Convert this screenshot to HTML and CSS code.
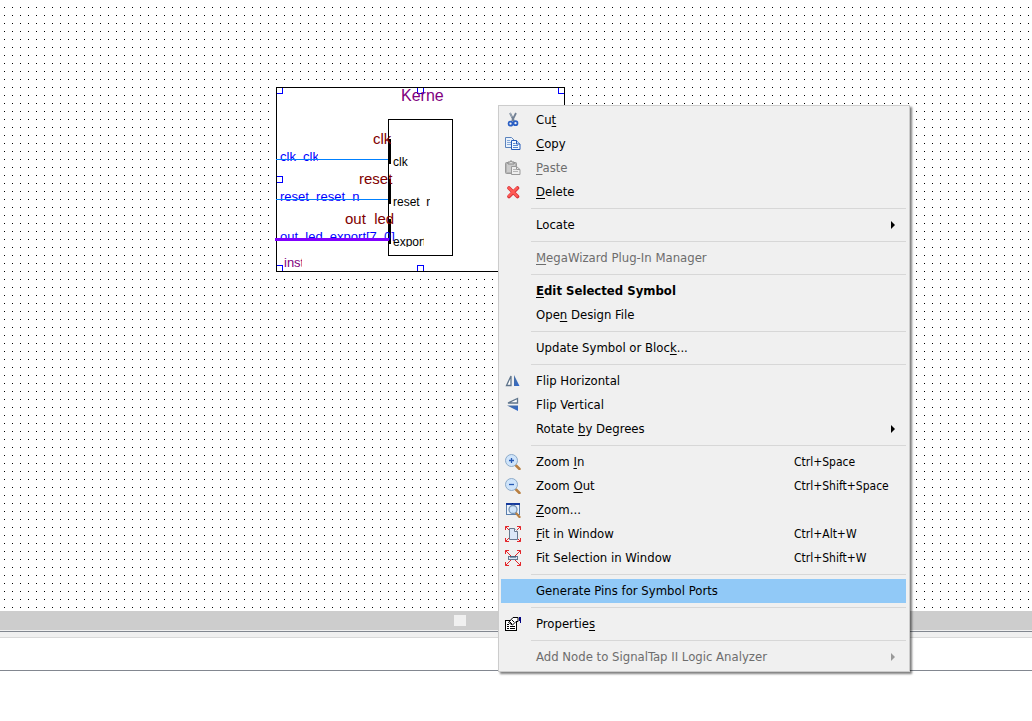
FILE: index.html
```
<!DOCTYPE html>
<html lang="en">
<head>
<meta charset="utf-8">
<title>Block Editor</title>
<link rel="stylesheet" href="styles.css">
</head>
<body>
<main class="editor">
  <section class="canvas" aria-label="Schematic">
    <svg class="symbol" width="290" height="185" viewBox="275 87 290 185" shape-rendering="crispEdges">
      <defs>
        <clipPath id="c-clk"><rect x="278" y="148" width="40" height="16"/></clipPath>
        <clipPath id="c-bus"><rect x="278" y="228" width="120" height="13"/></clipPath>
        <clipPath id="c-reset"><rect x="390" y="194" width="40" height="16"/></clipPath>
        <clipPath id="c-export"><rect x="390" y="234" width="34" height="13"/></clipPath>
        <clipPath id="c-inst"><rect x="280" y="254" width="22" height="16"/></clipPath>
      </defs>
      <rect x="276" y="87" width="289" height="185" fill="#fff"/>
      <g fill="none" stroke="#0000ff">
        <rect x="276.5" y="87.5" width="6" height="6"/>
        <rect x="417.5" y="87.5" width="6" height="6"/>
        <rect x="558.5" y="87.5" width="6" height="6"/>
        <rect x="276.5" y="176.5" width="6" height="6"/>
        <rect x="276.5" y="265.5" width="6" height="6"/>
        <rect x="417.5" y="265.5" width="6" height="6"/>
      </g>
      <g fill="none" stroke="#000">
        <rect x="276.5" y="87.5" width="288" height="184"/>
        <rect x="388.5" y="119.5" width="64" height="136"/>
      </g>
      <path d="M388 139h3v25h-3zM388 179h3v25h-3zM388 219h3v25h-3z"/>
      <text class="title" x="401" y="101">Kerne</text>
      <g class="port">
        <text x="373" y="144">clk</text>
        <text x="359" y="184">reset</text>
        <text x="345" y="224">out&#160;&#160;led</text>
      </g>
      <g class="signal">
        <text x="280" y="161" clip-path="url(#c-clk)">clk&#160;&#160;clk</text>
        <text x="280" y="201">reset&#160;&#160;reset&#160;&#160;n</text>
        <text x="280" y="241" clip-path="url(#c-bus)">out&#160;&#160;led&#160;&#160;export[7&#160;&#160;0]</text>
      </g>
      <g class="pin">
        <text x="393" y="166">clk</text>
        <text x="393" y="206" clip-path="url(#c-reset)">reset&#160;&#160;n</text>
        <text x="393" y="246" clip-path="url(#c-export)">export</text>
      </g>
      <text class="instance" x="284" y="267" clip-path="url(#c-inst)">inst</text>
      <path fill="#0080ff" d="M276 159h112v1H276zM276 199h112v1H276z"/>
      <path fill="#8000ff" d="M275 238h114v3H275z"/>
    </svg>

    <div class="menu" role="menu">
      <button class="item" role="menuitem">
        <svg class="icon" viewBox="0 0 16 16"><path d="M5 1l4 8M11 1L7 9" fill="none" stroke="#718094" stroke-width="1.8"/><path d="M5.300 1l1.500 4" stroke="#b4bec9" stroke-width=".7"/><circle cx="5.500" cy="11.700" r="2" fill="none" stroke="#2a5fc4" stroke-width="1.700"/><circle cx="10.500" cy="11.200" r="2" fill="none" stroke="#2a5fc4" stroke-width="1.700"/></svg>
        <span class="label">Cu<u>t</u></span></button>
      <button class="item" role="menuitem">
        <svg class="icon" viewBox="0 0 16 16"><path d="M.5 1.500h6l3 3v7h-9z" fill="#e9f1fb" stroke="#5b83bd"/><path d="M2 4.500h3M2 6.500h4M2 8.500h4" stroke="#86a9d8"/><path d="M6.500 4.500h5l3.500 3.500v5.500H6.500z" fill="#f4f8ff" stroke="#255bb8"/><path d="M11.500 4.500V8H15" fill="#cfe0f7" stroke="#255bb8"/><path d="M8 7.500h2.500M8 9.500h5M8 11.500h5" stroke="#5a8ad0"/></svg>
        <span class="label"><u>C</u>opy</span></button>
      <button class="item" role="menuitem" disabled>
        <svg class="icon" viewBox="0 0 16 16"><rect x=".5" y="2.500" width="11" height="11" rx="1" fill="#b4b4b4" stroke="#999"/><path d="M2 4h8v8H2z" fill="#ccc"/><path d="M3 4V2h2l1-1.500L7 2h2v2z" fill="#ddd" stroke="#888"/><path d="M6.500 6.500h5l3.500 3v5H6.500z" fill="#eee" stroke="#999"/><path d="M8 9.500h3M8 11.500h5" stroke="#b5b5b5"/><path d="M11.500 6.500v3H15" fill="none" stroke="#999"/></svg>
        <span class="label"><u>P</u>aste</span></button>
      <button class="item" role="menuitem">
        <svg class="icon" viewBox="0 0 16 16"><path d="M4 4l8.500 8.500M12.500 4L4 12.500" stroke="#d8323a" stroke-width="3.600" stroke-linecap="round"/><path d="M4 4l8 8M12 4l-8 8" stroke="#ff5b55" stroke-width="2.300" stroke-linecap="round"/></svg>
        <span class="label"><u>D</u>elete</span></button>
      <hr>
      <button class="item" role="menuitem" aria-haspopup="true"><span class="label">Locate</span><span class="arrow"></span></button>
      <hr>
      <button class="item" role="menuitem" disabled><span class="label"><u>M</u>egaWizard Plug-In Manager</span></button>
      <hr>
      <button class="item strong" role="menuitem"><span class="label"><u>E</u>dit Selected Symbol</span></button>
      <button class="item" role="menuitem"><span class="label">Ope<u>n</u> Design File</span></button>
      <hr>
      <button class="item" role="menuitem"><span class="label">Update Symbol or Bloc<u>k</u>...</span></button>
      <hr>
      <button class="item" role="menuitem">
        <svg class="icon" viewBox="0 0 16 16"><defs><linearGradient id="blue" x2="1" y2="1"><stop stop-color="#4a6f9e"/><stop offset="1" stop-color="#2f68cf"/></linearGradient></defs><path d="M6 3v9.500H1.500z" fill="#fff" stroke="#60758c" stroke-width="1.300"/><path d="M9 2l5.500 11H9z" fill="url(#blue)"/></svg>
        <span class="label">Flip Horizontal</span></button>
      <button class="item" role="menuitem">
        <svg class="icon" viewBox="0 0 16 16"><path d="M12.500 1.500V6H3z" fill="#fff" stroke="#60758c" stroke-width="1.300"/><path d="M2 8.500h11V14z" fill="url(#blue)"/></svg>
        <span class="label">Flip Vertical</span></button>
      <button class="item" role="menuitem" aria-haspopup="true"><span class="label">Rotate <u>b</u>y Degrees</span><span class="arrow"></span></button>
      <hr>
      <button class="item" role="menuitem">
        <svg class="icon" viewBox="0 0 16 16"><path d="M11 11.500l3.500 3.500" stroke="#b98043" stroke-width="2.500" stroke-linecap="round"/><circle cx="6.500" cy="6.500" r="6" fill="#cfe4fa" stroke="#8dabc9"/><path d="M6.500 4v5M4 6.500h5" stroke="#2558b4" stroke-width="1.300"/></svg>
        <span class="label">Zoom <u>I</u>n</span><span class="keys">Ctrl+Space</span></button>
      <button class="item" role="menuitem">
        <svg class="icon" viewBox="0 0 16 16"><path d="M11 11.500l3.500 3.500" stroke="#b98043" stroke-width="2.500" stroke-linecap="round"/><circle cx="6.500" cy="6.500" r="6" fill="#cfe4fa" stroke="#8dabc9"/><path d="M4 6.500h5" stroke="#2558b4" stroke-width="1.300"/></svg>
        <span class="label">Zoom <u>O</u>ut</span><span class="keys">Ctrl+Shift+Space</span></button>
      <button class="item" role="menuitem">
        <svg class="icon" viewBox="0 0 16 16"><rect x="1.500" y="1.500" width="13" height="11" fill="#edf3fb" stroke="#5a7fae"/><path d="M1 1h14v2H1z" fill="#153a9c"/><path d="M11 11l3.500 4" stroke="#b98043" stroke-width="2.300" stroke-linecap="round"/><circle cx="8" cy="7.500" r="4" fill="#cfe4fa" stroke="#7794b3" stroke-width="1.300"/></svg>
        <span class="label"><u>Z</u>oom...</span></button>
      <button class="item" role="menuitem">
        <svg class="icon" viewBox="0 0 16 16"><path d="M.5 4V.500H4M.5.500l3.500 3.500M12 .500h3.500V4M15.500.500L12 4M.5 12v3.500H4M.5 15.500L4 12M12 15.500h3.500V12M15.500 15.500L12 12" fill="none" stroke="#e3262b"/><path d="M4.500 2.500h5l3 3v8h-8z" fill="#dbe8f8" stroke="#66788f"/><path d="M9.500 2.500v3h3" fill="#fff" stroke="#66788f"/></svg>
        <span class="label"><u>F</u>it in Window</span><span class="keys">Ctrl+Alt+W</span></button>
      <button class="item" role="menuitem">
        <svg class="icon" viewBox="0 0 16 16"><path d="M.5 4V.500H4M.5.500l5.500 5.500M12 .500h3.500V4M15.500.500L10 6M.5 12v3.500H4M.5 15.500L6 10M12 15.500h3.500V12M15.500 15.500L10 10" fill="none" stroke="#e3262b"/><rect x="3.500" y="6.500" width="9" height="3" fill="#dbe8f8" stroke="#66788f"/><path d="M6 6v2M8 6v2M10 6v2" stroke="#31506f"/></svg>
        <span class="label">Fit Selection in Window</span><span class="keys">Ctrl+Shift+W</span></button>
      <hr>
      <button class="item active" role="menuitem"><span class="label">Generate Pins for Symbol Ports</span></button>
      <hr>
      <button class="item" role="menuitem">
        <svg class="icon" viewBox="0 0 16 16" shape-rendering="crispEdges"><path d="M.5 4.500h11v10H.5z" fill="#fff" stroke="#000"/><path d="M2 10.500h2M5 10.500h5M2 12.500h2M5 12.500h5M2 8.500h2" stroke="#000"/><path d="M3.500 6.500L8 1.500h5v4h-2L7.500 9z" fill="#fff" stroke="#000" shape-rendering="auto"/><path d="M5 6l2 2M7 4l2 2" stroke="#000" shape-rendering="auto"/><path d="M14 1h2v6h-1V5h-1z" fill="#000080"/></svg>
        <span class="label">Propertie<u>s</u></span></button>
      <hr>
      <button class="item" role="menuitem" aria-haspopup="true" disabled><span class="label">Add Node to SignalTap II Logic Analyzer</span><span class="arrow"></span></button>
    </div>
  </section>
  <div class="scrollbar"><div class="thumb"></div></div>
  <div class="splitter"></div>
  <section class="pane"></section>
  <footer class="status"></footer>
</main>
</body>
</html>
```
FILE: styles.css
```
* { box-sizing: border-box; }
body { margin: 0; background: #fff; font: 13px/24px "DejaVu Sans Condensed", "DejaVu Sans", sans-serif; font-stretch: condensed; }
.editor { display: flex; flex-direction: column; height: 100vh; overflow: hidden; }
.canvas {
  position: relative;
  flex: 1;
  background: conic-gradient(from 270deg at 1px 1px, #000 90deg, transparent 0) 4px 7px / 8px 8px;
}
.symbol { position: absolute; left: 275px; top: 87px; font-family: "Liberation Sans", Arial, sans-serif; font-size: 12px; font-stretch: normal; }
.title { font-size: 16px; fill: #800080; }
.port { font-size: 15px; fill: #800000; }
.signal { font-size: 13px; fill: #0000ff; }
.instance { font-size: 13px; fill: #800080; }

.menu {
  position: absolute;
  z-index: 1;
  left: 498px;
  top: 105px;
  width: 412px;
  padding: 2px 3px 2px 2px;
  background: #f0f0f0;
  border: 1px solid #ccc;
  box-shadow: 2px 2px 2px rgba(0, 0, 0, .5);
}
.item {
  display: grid;
  grid-template-columns: 16px 1fr 101px;
  column-gap: 15px;
  align-items: center;
  width: 100%;
  height: 24px;
  padding: 0 11px 0 4px;
  border: 0;
  background: none;
  color: #000;
  font: inherit;
  text-align: left;
  white-space: nowrap;
}
.item:disabled { color: #6d6d6d; }
.item.strong { font-weight: bold; }
.item.active { background: #91c9f7; }
.icon { width: 16px; height: 16px; }
.label { grid-column: 2; }
.keys, .arrow { grid-column: 3; }
.keys { font-size: 12px; }
.item u { text-underline-offset: 2px; text-decoration-thickness: 1px; }
.arrow { justify-self: end; border: 4px solid transparent; border-left-color: currentColor; border-right: 0; }
.item:disabled .arrow { border-left-color: #999; }
.menu hr { height: 1px; margin: 4px 0 4px 30px; border: 0; background: #d7d7d7; }

.scrollbar { height: 19px; padding: 4px 0 0 454px; background: #cdcdcd; }
.thumb { width: 12px; height: 11px; background: #f0f0f0; }
.splitter { height: 8px; background: linear-gradient(#f0f0f0 1px, #828790 1px 2px, #f0f0f0 2px 7px, #d9d9d9 7px); }
.pane { height: 33px; border-bottom: 1px solid #828790; }
.status { height: 50px; }
```
